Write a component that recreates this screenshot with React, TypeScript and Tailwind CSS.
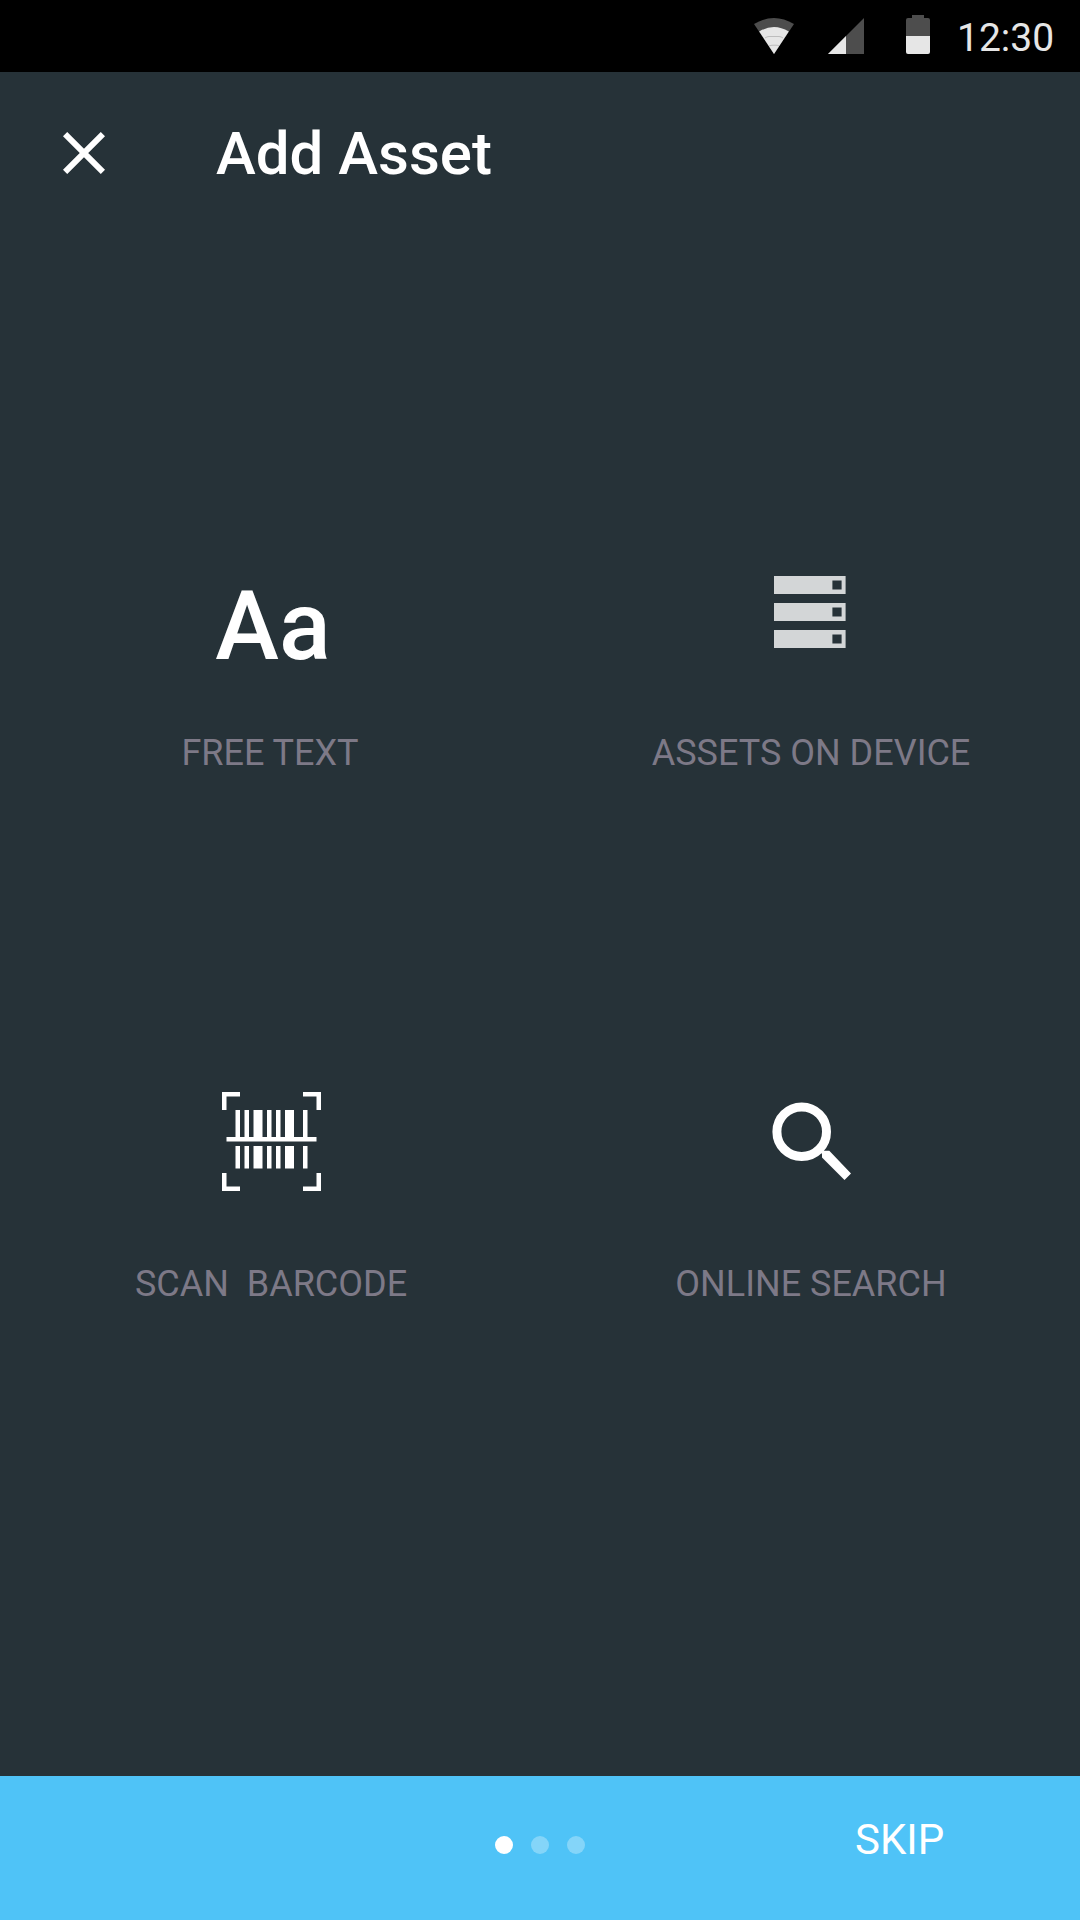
import React from "react";

function WifiIcon() {
  return (
    <svg className="ml-[753px] h-[38px] w-[42px] shrink-0" viewBox="753 16 42 38">
      <path d="M754 24Q774 12 794 24L774 54Z" fill="#4d4d4d" />
      <path d="M759.2 31.5Q774 22.5 788.8 31.5L774 54Z" fill="#e6e6e6" />
      <path d="M765 38q2-1.5 4-1.5h10q2 0 4 1.5M769 46q2-.8 4-.8h3q2 0 3 .8" fill="none" stroke="#bdbdbd" strokeWidth="1" />
    </svg>
  );
}

function SignalIcon() {
  return (
    <svg className="ml-[33px] h-9 w-9 shrink-0" viewBox="0 0 36 36">
      <path d="M36 0V36H0Z" fill="#4d4d4d" />
      <path d="M18 18V36H0Z" fill="#e6e6e6" />
    </svg>
  );
}

function BatteryIcon() {
  return (
    <svg className="ml-[42px] h-[39px] w-6 shrink-0" viewBox="0 0 24 39">
      <path d="M6 0h12v3h4q2 0 2 2v16H0V5q0-2 2-2h4z" fill="#4d4d4d" />
      <path d="M0 21h24v16q0 2-2 2H2q-2 0-2-2z" fill="#e6e6e6" />
    </svg>
  );
}

function StorageIcon() {
  return (
    <svg className="h-[72px] w-[72px]" viewBox="0 0 72 72">
      {[0, 27, 54].map((y) => (
        <path key={y} fillRule="evenodd" d={`M0 ${y}h71.6v18H0zM58.4 ${y + 4.4}v9.2h9.2v-9.2z`} fill="#d3d6d7" />
      ))}
    </svg>
  );
}

const bars: [number, number][] = [
  [13.5, 4.5],
  [22.5, 4.5],
  [31.5, 9],
  [45, 4.5],
  [54, 4.5],
  [63, 9],
  [81, 4.5],
];

function BarcodeIcon() {
  return (
    <svg className="h-[99px] w-[99px]" viewBox="0 0 99 99" fill="white">
      <path d="M0 0h18v4.5H4.5V18H0zM81 0h18v18h-4.5V4.5H81zM0 81h4.5v13.5H18V99H0zM94.5 81H99v18H81v-4.5h13.5zM4.5 45h90v4.5h-90z" />
      {bars.map(([x, w]) => (
        <path key={x} d={`M${x} 18h${w}v27h-${w}zM${x} 54h${w}v22.5h-${w}z`} />
      ))}
    </svg>
  );
}

function SearchIcon() {
  return (
    <svg className="h-[80px] w-[80px]" viewBox="0 0 80 80">
      <circle cx="29.7" cy="29.7" r="24.8" fill="none" stroke="white" strokeWidth="9" />
      <path d="M47.5 50.5l3-3 1.8 1.2h5L79 71.5 72.5 78 50 55.5v-4z" fill="white" />
    </svg>
  );
}

function Option({ label, icon, pad, labelPad = "" }: { label: string; icon: React.ReactNode; pad: string; labelPad?: string }) {
  return (
    <button className="flex w-[540px] flex-col items-center">
      <span className={`flex h-[174px] items-start justify-center ${pad}`}>{icon}</span>
      <span className={`whitespace-pre text-[36px] leading-[42px] text-[#7d7987] ${labelPad}`}>{label}</span>
    </button>
  );
}

export default function App() {
  return (
    <div className="flex h-[1920px] w-[1080px] flex-col overflow-hidden bg-[#263238] font-[Roboto,sans-serif] text-white">
      <div className="flex h-[72px] items-start bg-black">
        <div className="pt-4"><WifiIcon /></div>
        <div className="pt-[18px]"><SignalIcon /></div>
        <div className="pt-[15px]"><BatteryIcon /></div>
        <span className="ml-[27px] pt-[15px] text-[39px] leading-[46px] text-[#e6e6e6]">12:30</span>
      </div>

      <header className="flex h-[168px] items-start">
        <button className="ml-[63px] mt-[60px]" aria-label="Close">
          <svg className="h-[42px] w-[42px]" viewBox="0 0 42 42">
            <path d="M2.1 2.1L39.9 39.9M39.9 2.1L2.1 39.9" stroke="white" strokeWidth="6" />
          </svg>
        </button>
        <h1 className="ml-[111px] mt-[46px] text-[60px] font-medium leading-[72px]">Add Asset</h1>
      </header>

      <main className="flex flex-1 flex-col">
        <div className="mt-[318px] flex">
          <Option
            label="FREE TEXT"
            pad="pl-[6px] pt-[25px]"
            icon={<span className="text-[96px] font-medium leading-[86px]">Aa</span>}
          />
          <Option label="ASSETS ON DEVICE" pad="pt-[18px]" labelPad="pl-[2px]" icon={<StorageIcon />} />
        </div>
        <div className="mt-[315px] flex">
          <Option label="SCAN  BARCODE" pad="pl-[3px] pt-[3px]" labelPad="pl-[2px]" icon={<BarcodeIcon />} />
          <Option label="ONLINE SEARCH" pad="pl-[4px] pt-[13px]" labelPad="pl-[2px]" icon={<SearchIcon />} />
        </div>
      </main>

      <footer className="flex h-36 items-start bg-[#4fc3f7]">
        <div className="ml-[495px] mt-[60px] flex gap-[18px]">
          <span className="size-[18px] rounded-full bg-white" />
          <span className="size-[18px] rounded-full bg-white/30" />
          <span className="size-[18px] rounded-full bg-white/30" />
        </div>
        <button className="ml-[270px] mt-[39px] text-[42px] leading-[50px]">SKIP</button>
      </footer>
    </div>
  );
}
